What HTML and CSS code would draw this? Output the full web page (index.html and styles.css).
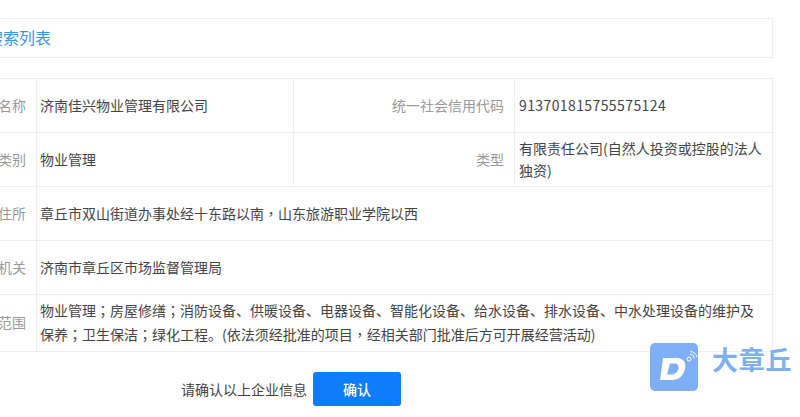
FILE: index.html
```html
<!DOCTYPE html>
<html lang="zh-CN">
<head>
<meta charset="utf-8">
<title>搜索列表</title>
<link rel="stylesheet" href="styles.css">
</head>
<body>
<main class="page">
  <h2 class="panel-title"><span>搜索列表</span></h2>
  <table class="info">
    <colgroup>
      <col class="c-label"><col class="c-value"><col class="c-label2"><col class="c-value2">
    </colgroup>
    <tr class="row">
      <th>企业名称</th><td>济南佳兴物业管理有限公司</td>
      <th>统一社会信用代码</th><td class="code">913701815755575124</td>
    </tr>
    <tr class="row">
      <th>行业类别</th><td>物业管理</td>
      <th>类型</th><td class="tight">有限责任公司(自然人投资或控股的法人独资)</td>
    </tr>
    <tr class="row">
      <th>企业住所</th><td colspan="3">章丘市双山街道办事处经十东路以南<span class="pc" lang="zh-TW">，</span>山东旅游职业学院以西</td>
    </tr>
    <tr class="row">
      <th>登记机关</th><td colspan="3">济南市章丘区市场监督管理局</td>
    </tr>
    <tr class="row-scope">
      <th>经营范围</th><td colspan="3">物业管理<span class="pc" lang="zh-TW">；</span>房屋修缮<span class="pc" lang="zh-TW">；</span>消防设备、供暖设备、电器设备、智能化设备、给水设备、排水设备、中水处理设备的维护及保养<span class="pc" lang="zh-TW">；</span>卫生保洁<span class="pc" lang="zh-TW">；</span>绿化工程。(依法须经批准的项目<span class="pc" lang="zh-TW">，</span>经相关部门批准后方可开展经营活动)</td>
    </tr>
  </table>
  <div class="confirm">
    <span class="confirm-text">请确认以上企业信息</span>
    <button class="confirm-btn" type="button">确认</button>
  </div>
</main>
<aside class="watermark">
  <svg class="wm-logo" width="48" height="48" viewBox="0 0 48 48" aria-hidden="true">
    <rect width="48" height="48" rx="5" fill="#7eaef5"/>
    <path fill-rule="evenodd" fill="#fff" d="M13 15H27C34 15 36.500 20 35 26C33 33 29 37 22 37H10ZM20 20.500L17 31.500H21C25 31.500 27.500 29.500 28.300 26C29 22.500 27.500 20.500 25 20.500Z"/>
    <circle cx="39" cy="16" r="2" fill="none" stroke="#fff" stroke-width="1"/>
    <path fill="none" stroke="#fff" stroke-width="1" d="M40 11A5 5 0 0 1 44.500 15.500M40.500 8.500A7.500 7.500 0 0 1 47 14"/>
  </svg>
  <span class="wm-text">大章丘</span>
</aside>
</body>
</html>
```
FILE: styles.css
```css
* { box-sizing: border-box; }
html, body { margin: 0; height: 417px; overflow: hidden; background: #fff; }
body {
  position: relative;
  font-family: "Noto Sans CJK SC", "Liberation Sans", sans-serif;
  font-size: 14px;
  color: #444;
}
.page { width: 773px; padding-top: 18px; }
.panel-title {
  margin: 0 0 20px -20px;
  width: 793px;
  height: 40px;
  border: 1px solid #eee;
  padding-left: 6px;
  font-size: 16px;
  font-weight: 400;
  line-height: 36px;
  color: #3a94e6;
}
.info {
  margin-left: -60px;
  width: 833px;
  table-layout: fixed;
  border-collapse: collapse;
}
.c-label { width: 96px; }
.c-value { width: 257px; }
.c-label2 { width: 221px; }
.info th, .info td { border: 1px solid #eee; padding: 0 10px 2px 3px; vertical-align: middle; }
.info th {
  padding: 0 10px 2px 0;
  font-weight: 400;
  text-align: right;
  white-space: nowrap;
  color: #999;
}
.row { height: 54px; }
.row-scope { height: 57px; }
.row-scope td { line-height: 24px; }
.info .tight { line-height: 22px; padding-left: 4px; }
.info .code { letter-spacing: 0.4px; padding-left: 4px; }
.pc { font-family: "Noto Sans CJK TC", sans-serif; }
.confirm {
  display: flex;
  justify-content: flex-start;
  align-items: center;
  gap: 6px;
  margin: 20px 0 0 181px;
}
.confirm-text { color: #444; }
.confirm-btn {
  width: 88px;
  height: 34px;
  border: 0;
  border-radius: 3px;
  background: #0f7dfb;
  color: #fff;
  font: 500 14px "Noto Sans CJK SC", sans-serif;
}
.watermark {
  position: absolute;
  left: 650px;
  top: 343px;
  display: flex;
  align-items: flex-start;
  gap: 14px;
}
.wm-logo { display: block; flex: none; }
.wm-text {
  font-size: 26px;
  font-weight: 700;
  line-height: 26px;
  letter-spacing: 0.7px;
  margin-top: 3px;
  color: #7eaef5;
  white-space: nowrap;
}
```
